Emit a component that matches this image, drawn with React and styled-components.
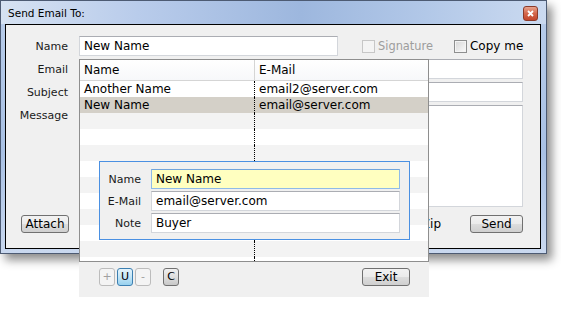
import styled, { createGlobalStyle } from 'styled-components'

const GlobalStyle = createGlobalStyle`
    html, body {
        margin: 0;
        padding: 0;
        background: #fff;
        font-family: "DejaVu Sans", Verdana, sans-serif;
    }
`

const Page = styled.div`
    position: relative;
    width: 561px;
    height: 325px;
    overflow: hidden;
`

const Window = styled.div`
    width: 547px;
    box-sizing: border-box;
    border: 1px solid #4d5b73;
    padding: 0 5px 4px 4px;
    background: linear-gradient(180deg, #b9cdea 0%, #a9c1e4 60%, #c9d8ef 100%);
    box-shadow: 5px 6px 9px rgba(0, 0, 0, 0.45);
`

const TitleBar = styled.div`
    height: 23px;
    margin: 0 -5px 0 -4px;
    padding: 0 8px 0 7px;
    display: flex;
    align-items: center;
    justify-content: space-between;
    background: linear-gradient(90deg, #d6e2f2 0%, #b9cceb 25%, #9db7de 55%, #b2c8e8 78%, #cbdaf0 100%);
`

const Title = styled.span`
    font-size: 10.5px;
    color: #000;
`

const CloseButton = styled.div`
    width: 15px;
    height: 15px;
    margin-top: 1px;
    border: 1px solid #8b3a2a;
    border-radius: 3px;
    background: linear-gradient(180deg, #e8a48e 0%, #d4664b 50%, #c2452b 100%);
    display: flex;
    align-items: center;
    justify-content: center;
    box-sizing: border-box;
`

const Content = styled.div`
    height: 225px;
    box-sizing: border-box;
    border: 1px solid #000;
    background: #f0f0f0;
    padding: 11px 17px 0 0;
`

const Form = styled.div`
    display: grid;
    grid-template-columns: 62px 1fr;
    grid-template-rows: 20px 20px 20px 102px;
    column-gap: 11px;
    row-gap: 3px;
`

const Label = styled.div`
    font-size: 11px;
    color: #1a1a1a;
    text-align: right;
    align-self: ${(p) => (p.$top ? 'start' : 'center')};
    padding-top: ${(p) => (p.$top ? '4px' : '0')};
`

const Input = styled.div`
    box-sizing: border-box;
    flex-shrink: 0;
    height: ${(p) => p.$h || '20px'};
    width: ${(p) => p.$w || 'auto'};
    border: 1px solid ${(p) => (p.$focus ? '#8fbbe8' : '#d3d6db')};
    border-top-color: ${(p) => (p.$focus ? '#6fa4dc' : '#abadb3')};
    background: ${(p) => p.$bg || '#fff'};
    font-size: 12px;
    color: #000;
    padding: 0 4px;
    line-height: 18px;
    white-space: nowrap;
    overflow: hidden;
`

const NameRow = styled.div`
    display: flex;
    align-items: center;
    white-space: nowrap;
`

const Check = styled.label`
    display: flex;
    align-items: center;
    flex-shrink: 0;
    gap: 3px;
    margin-left: ${(p) => p.$ml};
    font-size: ${(p) => (p.$disabled ? '11.4px' : '12px')};
    color: ${(p) => (p.$disabled ? '#9d9d9d' : '#000')};
`

const Box = styled.span`
    width: 13px;
    height: 13px;
    box-sizing: border-box;
    border: 1px solid ${(p) => (p.$disabled ? '#c7c7c7' : '#8e8f8f')};
    background: ${(p) => (p.$disabled ? '#f4f4f4' : 'linear-gradient(135deg, #d6d6d6, #fbfbfb)')};
    box-shadow: ${(p) => (p.$disabled ? 'none' : 'inset 0 0 0 1px #f4f4f4')};
`

const BottomRow = styled.div`
    display: flex;
    align-items: center;
    margin-top: 8px;
    padding-left: 15px;
`

const Button = styled.button`
    height: 18px;
    width: ${(p) => p.$w};
    padding: 0;
    border: 1px solid #707070;
    border-radius: 3px;
    background: linear-gradient(180deg, #f2f2f2 0%, #ebebeb 50%, #dddddd 51%, #cfcfcf 100%);
    font-family: "DejaVu Sans", Verdana, sans-serif;
    font-size: 12px;
    color: #000;
    line-height: 16px;
`

const Hint = styled.span`
    margin-left: auto;
    margin-right: 29px;
    font-size: 12px;
    color: #000;
`

/* dropdown list popup */

const Popup = styled.div`
    position: absolute;
    left: 79px;
    top: 59px;
    width: 350px;
`

const List = styled.div`
    position: relative;
    height: 203px;
    box-sizing: border-box;
    border: 1px solid #8e8e8e;
    background: #fff;
    overflow: hidden;
`

const Header = styled.div`
    display: grid;
    grid-template-columns: 174px 1fr;
    height: 21px;
    box-sizing: border-box;
    border-bottom: 1px solid #d5d5d5;
    background: linear-gradient(180deg, #ffffff 0%, #f7f8fa 100%);
`

const HeadCell = styled.div`
    font-size: 12px;
    line-height: 20px;
    padding-left: 4px;
    border-left: ${(p) => (p.$sep ? '1px solid #d5d5d5' : 'none')};
`

const Row = styled.div`
    display: grid;
    grid-template-columns: 174px 1fr;
    height: 16px;
    background: ${(p) => (p.$selected ? '#d4d0c8' : p.$alt ? '#f3f3f3' : '#fff')};
`

const Cell = styled.div`
    font-size: 12px;
    line-height: 16px;
    padding-left: 4px;
    color: #000;
    white-space: nowrap;
    border-left: ${(p) => (p.$sep ? '1px dotted #000' : 'none')};
`

const Detail = styled.div`
    position: absolute;
    left: 19px;
    top: 101px;
    width: 311px;
    height: 79px;
    box-sizing: border-box;
    border: 1px solid #4a90e2;
    background: #f0f0f0;
    padding: 7px 9px 0 0;
    display: grid;
    grid-template-columns: 41px 1fr;
    grid-auto-rows: 20px;
    column-gap: 10px;
    row-gap: 2px;
`

const Toolbar = styled.div`
    height: 35px;
    box-sizing: border-box;
    background: #f0f0f0;
    display: flex;
    align-items: flex-start;
    padding: 6px 19px 0 20px;
`

const ToolBtn = styled.div`
    width: 16px;
    height: 18px;
    box-sizing: border-box;
    margin-left: ${(p) => p.$ml || '0'};
    border: 1px solid ${(p) => (p.$active ? '#3c7fb1' : p.$dark ? '#707070' : '#bcbcbc')};
    border-radius: 3px;
    background: ${(p) =>
        p.$active
            ? 'linear-gradient(180deg, #e5f4fc 0%, #c4e5f6 50%, #98d1ef 100%)'
            : p.$dark
              ? 'linear-gradient(180deg, #f0f0f0 0%, #dedede 50%, #c8c8c8 100%)'
              : '#f4f4f4'};
    font-size: 11px;
    line-height: 16px;
    text-align: center;
    color: ${(p) => (p.$disabled ? '#a0a0a0' : '#000')};
`

const ExitButton = styled(Button)`
    margin-left: auto;
`

const fillers = Array.from({ length: 10 }, (_, i) => i)

const App = () => {
    return (
        <Page>
            <GlobalStyle />
            <Window>
                <TitleBar>
                    <Title>Send Email To:</Title>
                    <CloseButton>
                        <svg width="7" height="7" viewBox="0 0 7 7">
                            <path d="M1 1 L6 6 M6 1 L1 6" stroke="#fff" strokeWidth="1.8" />
                        </svg>
                    </CloseButton>
                </TitleBar>
                <Content>
                    <Form>
                        <Label>Name</Label>
                        <NameRow>
                            <Input $w="259px">New Name</Input>
                            <Check $ml="24px" $disabled>
                                <Box $disabled />
                                Signature
                            </Check>
                            <Check $ml="21px">
                                <Box />
                                Copy me
                            </Check>
                        </NameRow>
                        <Label>Email</Label>
                        <Input />
                        <Label>Subject</Label>
                        <Input />
                        <Label $top>Message</Label>
                        <Input $h="102px" />
                    </Form>
                    <BottomRow>
                        <Button $w="48px">Attach</Button>
                        <Hint>Zip</Hint>
                        <Button $w="53px">Send</Button>
                    </BottomRow>
                </Content>
            </Window>

            <Popup>
                <List>
                    <Header>
                        <HeadCell>Name</HeadCell>
                        <HeadCell $sep>E-Mail</HeadCell>
                    </Header>
                    <Row>
                        <Cell>Another Name</Cell>
                        <Cell $sep>email2@server.com</Cell>
                    </Row>
                    <Row $selected>
                        <Cell>New Name</Cell>
                        <Cell $sep>email@server.com</Cell>
                    </Row>
                    {fillers.map((i) => (
                        <Row key={i} $alt={i % 2 === 0}>
                            <Cell />
                            <Cell $sep />
                        </Row>
                    ))}
                    <Detail>
                        <Label>Name</Label>
                        <Input $bg="#ffffc0" $focus>New Name</Input>
                        <Label>E-Mail</Label>
                        <Input>email@server.com</Input>
                        <Label>Note</Label>
                        <Input>Buyer</Input>
                    </Detail>
                </List>
                <Toolbar>
                    <ToolBtn $disabled>+</ToolBtn>
                    <ToolBtn $active $ml="2px">U</ToolBtn>
                    <ToolBtn $disabled $ml="2px">-</ToolBtn>
                    <ToolBtn $dark $ml="12px">C</ToolBtn>
                    <ExitButton $w="48px">Exit</ExitButton>
                </Toolbar>
            </Popup>
        </Page>
    )
}

export default App
